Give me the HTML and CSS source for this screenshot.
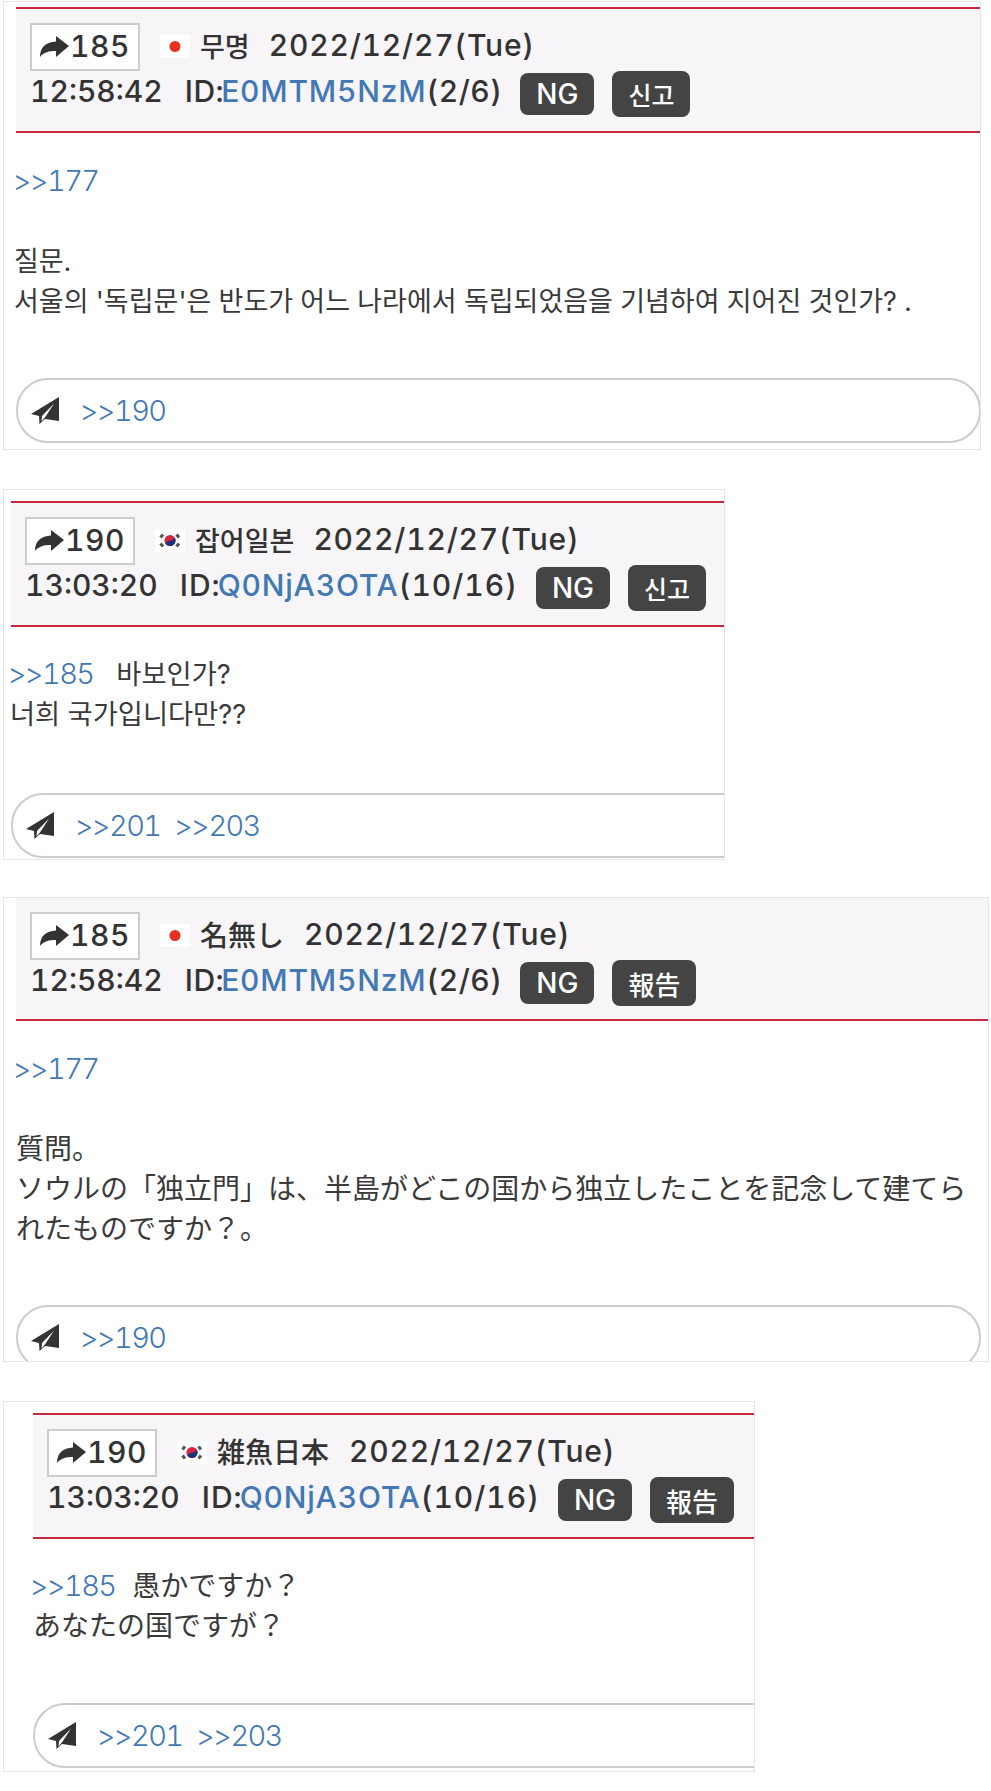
FILE: index.html
```html
<!DOCTYPE html>
<html lang="ko">
<head>
    <meta charset="UTF-8">
    <meta name="viewport" content="width=device-width, initial-scale=1.0">
    <title>thread</title>
    <link rel="stylesheet" href="styles.css">
</head>
<body>
    <svg class="icon-defs" width="0" height="0">
        <defs>
            <symbol id="icon-share" viewBox="0 0 29 21">
                <path d="M29 10L16 0V5.5C6 6 0 11 0 21C4 16 9 15 16 15V21Z"/>
            </symbol>
            <symbol id="icon-plane" viewBox="0 0 28 28">
                <path d="M28 0V24L14 22L8.5 27L8 19L0 17ZM23 6.5L11 19L10.5 24.5L15 19Z" fill-rule="evenodd"/>
            </symbol>
            <symbol id="flag-jp" viewBox="0 0 30 23">
                <rect width="30" height="23" fill="#fff"/>
                <circle cx="15" cy="11.5" r="5.5" fill="#e8301f"/>
            </symbol>
            <symbol id="flag-kr" viewBox="0 0 30 23">
                <rect width="30" height="23" fill="#fff"/>
                <circle cx="15" cy="11.5" r="5.5" fill="#d3273a"/>
                <path d="M10.3 14.4a5.5 5.5 0 0 0 9.4-5.8c-1.3 1.2-1.7 3.4-3.9 3.1-2.4-.4-3.7 1-5.5 2.7z" fill="#12357f"/>
                <path d="M5.5 8.5l2.5-3M21.5 5.5l2.5 3M5.5 14.5l2.5 3M21.5 17.5l2.5-3" stroke="#555" stroke-width="3" fill="none"/>
            </symbol>
        </defs>
    </svg>

    <article class="post post-ko-first">
        <header class="post-head">
            <div class="head-row">
                <span class="post-num"><svg class="ico-share"><use href="#icon-share"/></svg>185</span>
                <svg class="flag"><use href="#flag-jp"/></svg>
                <span class="name">무명</span>
                <span class="date">2022/12/27(Tue)</span>
            </div>
            <div class="head-row">
                <span class="time">12:58:42</span>
                <span class="uid">ID:<a class="link">E0MTM5NzM</a>(2/6)</span>
                <span class="btn btn-ng">NG</span>
                <span class="btn btn-report">신고</span>
            </div>
        </header>
        <div class="post-body">
            <a class="link">&gt;&gt;177</a><br><br>질문.<br>서울의 '독립문'은 반도가 어느 나라에서 독립되었음을 기념하여 지어진 것인가? .
        </div>
        <div class="reply-bar">
            <svg class="ico-plane"><use href="#icon-plane"/></svg>
            <a class="link">&gt;&gt;190</a>
        </div>
    </article>

    <article class="post post-ko-second">
        <header class="post-head">
            <div class="head-row">
                <span class="post-num"><svg class="ico-share"><use href="#icon-share"/></svg>190</span>
                <svg class="flag"><use href="#flag-kr"/></svg>
                <span class="name">잡어일본</span>
                <span class="date">2022/12/27(Tue)</span>
            </div>
            <div class="head-row">
                <span class="time">13:03:20</span>
                <span class="uid">ID:<a class="link">Q0NjA3OTA</a>(10/16)</span>
                <span class="btn btn-ng">NG</span>
                <span class="btn btn-report">신고</span>
            </div>
        </header>
        <div class="post-body">
            <a class="link">&gt;&gt;185</a><span class="gap"></span>바보인가?<br>너희 국가입니다만??
        </div>
        <div class="reply-bar">
            <svg class="ico-plane"><use href="#icon-plane"/></svg>
            <a class="link">&gt;&gt;201</a>
            <a class="link">&gt;&gt;203</a>
        </div>
    </article>

    <article class="post post-ja-first" lang="ja">
        <header class="post-head">
            <div class="head-row">
                <span class="post-num"><svg class="ico-share"><use href="#icon-share"/></svg>185</span>
                <svg class="flag"><use href="#flag-jp"/></svg>
                <span class="name">名無し</span>
                <span class="date">2022/12/27(Tue)</span>
            </div>
            <div class="head-row">
                <span class="time">12:58:42</span>
                <span class="uid">ID:<a class="link">E0MTM5NzM</a>(2/6)</span>
                <span class="btn btn-ng">NG</span>
                <span class="btn btn-report">報告</span>
            </div>
        </header>
        <div class="post-body">
            <a class="link">&gt;&gt;177</a><br><br>質問。<br>ソウルの「独立門」は、半島がどこの国から独立したことを記念して建てられたものですか？。
        </div>
        <div class="reply-bar">
            <svg class="ico-plane"><use href="#icon-plane"/></svg>
            <a class="link">&gt;&gt;190</a>
        </div>
    </article>

    <article class="post post-ja-second" lang="ja">
        <header class="post-head">
            <div class="head-row">
                <span class="post-num"><svg class="ico-share"><use href="#icon-share"/></svg>190</span>
                <svg class="flag"><use href="#flag-kr"/></svg>
                <span class="name">雑魚日本</span>
                <span class="date">2022/12/27(Tue)</span>
            </div>
            <div class="head-row">
                <span class="time">13:03:20</span>
                <span class="uid">ID:<a class="link">Q0NjA3OTA</a>(10/16)</span>
                <span class="btn btn-ng">NG</span>
                <span class="btn btn-report">報告</span>
            </div>
        </header>
        <div class="post-body">
            <a class="link">&gt;&gt;185</a><span class="gap"></span>愚かですか？<br>あなたの国ですが？
        </div>
        <div class="reply-bar">
            <svg class="ico-plane"><use href="#icon-plane"/></svg>
            <a class="link">&gt;&gt;201</a>
            <a class="link">&gt;&gt;203</a>
        </div>
    </article>
</body>
</html>
```

FILE: styles.css
```css
body {
    margin: 0;
    background: #fff;
    color: #333;
    font-family: Inter, "Noto Sans CJK KR", sans-serif;
    font-size: 30px;
    font-variant-numeric: tabular-nums;
    overflow-x: hidden;
}
[lang="ja"] {
    font-family: Inter, "Noto Sans CJK JP", sans-serif;
}
.icon-defs {
    position: absolute;
}
.link {
    color: #4278b4;
}
.post {
    margin-left: 3px;
    border: 1px solid #e6e6e6;
    box-sizing: border-box;
    overflow: hidden;
}
.post-ko-first {
    width: 978px;
    height: 449px;
    margin-top: 1px;
    padding: 5px 0 0 12px;
}
.post-ko-second {
    width: 722px;
    height: 371px;
    margin-top: 39px;
    padding: 11px 0 0 7px;
}
.post-ja-first {
    width: 986px;
    height: 465px;
    margin-top: 37px;
    padding: 0 0 0 12px;
}
.post-ja-second {
    width: 752px;
    height: 371px;
    margin-top: 39px;
    padding: 11px 0 0 29px;
}
.post-head {
    display: flex;
    flex-direction: column;
    box-sizing: border-box;
    height: 126px;
    padding: 14px 0 0 14px;
    background: #f7f5f7;
    border-top: 2px solid #c9293c;
    border-bottom: 2px solid #c9293c;
    font-weight: 500;
    white-space: nowrap;
}
.post-ja-first .post-head {
    border-top: 0;
    height: 123px;
}
.head-row {
    display: flex;
    align-items: center;
    height: 46px;
}
.head-row:first-child {
    height: 48px;
}
.post-num {
    display: flex;
    align-items: center;
    box-sizing: border-box;
    width: 110px;
    height: 48px;
    padding: 0 0 2px 8px;
    background: #fff;
    border: 2px solid #ccc;
    letter-spacing: 0.5px;
}
.ico-share {
    flex: none;
    width: 29px;
    height: 21px;
    margin-right: 1px;
    fill: #333;
}
.flag {
    width: 30px;
    height: 23px;
    margin: 0 10px 2px 20px;
}
.name {
    margin: 0 19px 4px 0;
    font-size: 27px;
}
[lang="ja"] .name {
    margin-right: 20px;
    font-size: 28px;
}
.date {
    margin-bottom: 4px;
    letter-spacing: 0.8px;
}
.time {
    margin: 0 22px 7px 0;
}
.uid {
    margin-bottom: 7px;
    letter-spacing: 0.5px;
}
.post-ko-second .uid,
.post-ja-second .uid {
    letter-spacing: 1px;
}
.uid .link {
    margin-left: -3px;
    letter-spacing: 0.8px;
}
.btn {
    display: flex;
    align-items: center;
    justify-content: center;
    box-sizing: border-box;
    height: 42px;
    border-radius: 8px;
    background: #444;
    color: #fff;
    font-size: 28px;
}
.btn-ng {
    width: 74px;
    margin: 0 18px;
}
.btn-report {
    width: 78px;
    height: 46px;
    font-size: 25px;
    font-weight: 500;
}
[lang="ja"] .btn-report {
    width: 84px;
    font-size: 26px;
}
.post-body {
    box-sizing: border-box;
    height: 245px;
    margin-left: -2px;
    padding-top: 28px;
    font-size: 27px;
    line-height: 40px;
    color: #3a3a3a;
}
.post-ko-second .post-body {
    height: 166px;
    margin-left: -1px;
    font-size: 27.3px;
    padding-top: 27px;
}
.post-ja-first .post-body {
    height: 284px;
    margin-left: 0;
    font-size: 28px;
    padding-top: 28px;
}
.post-ja-second .post-body {
    height: 164px;
    margin-left: 0;
    font-size: 28px;
    padding-top: 27px;
}
.post-body .link {
    margin-left: -1px;
    font-size: 29px;
    font-weight: 300;
    letter-spacing: -1.7px;
}
.post-ko-second .post-body .link {
    margin-left: -2px;
}
.post-ja-first .post-body .link,
.post-ja-second .post-body .link {
    margin-left: -3px;
}
.gap {
    display: inline-block;
    width: 23px;
}
.post-ja-second .gap {
    width: 17px;
}
.reply-bar {
    display: flex;
    align-items: center;
    gap: 14px;
    box-sizing: border-box;
    width: 965px;
    height: 65px;
    padding-left: 13px;
    background: #fff;
    border: 2px solid #ccc;
    border-radius: 32px;
    font-size: 29px;
    font-weight: 300;
    letter-spacing: -1.7px;
}
.ico-plane {
    width: 28px;
    height: 28px;
    margin-right: 7px;
    fill: #333;
}
```
